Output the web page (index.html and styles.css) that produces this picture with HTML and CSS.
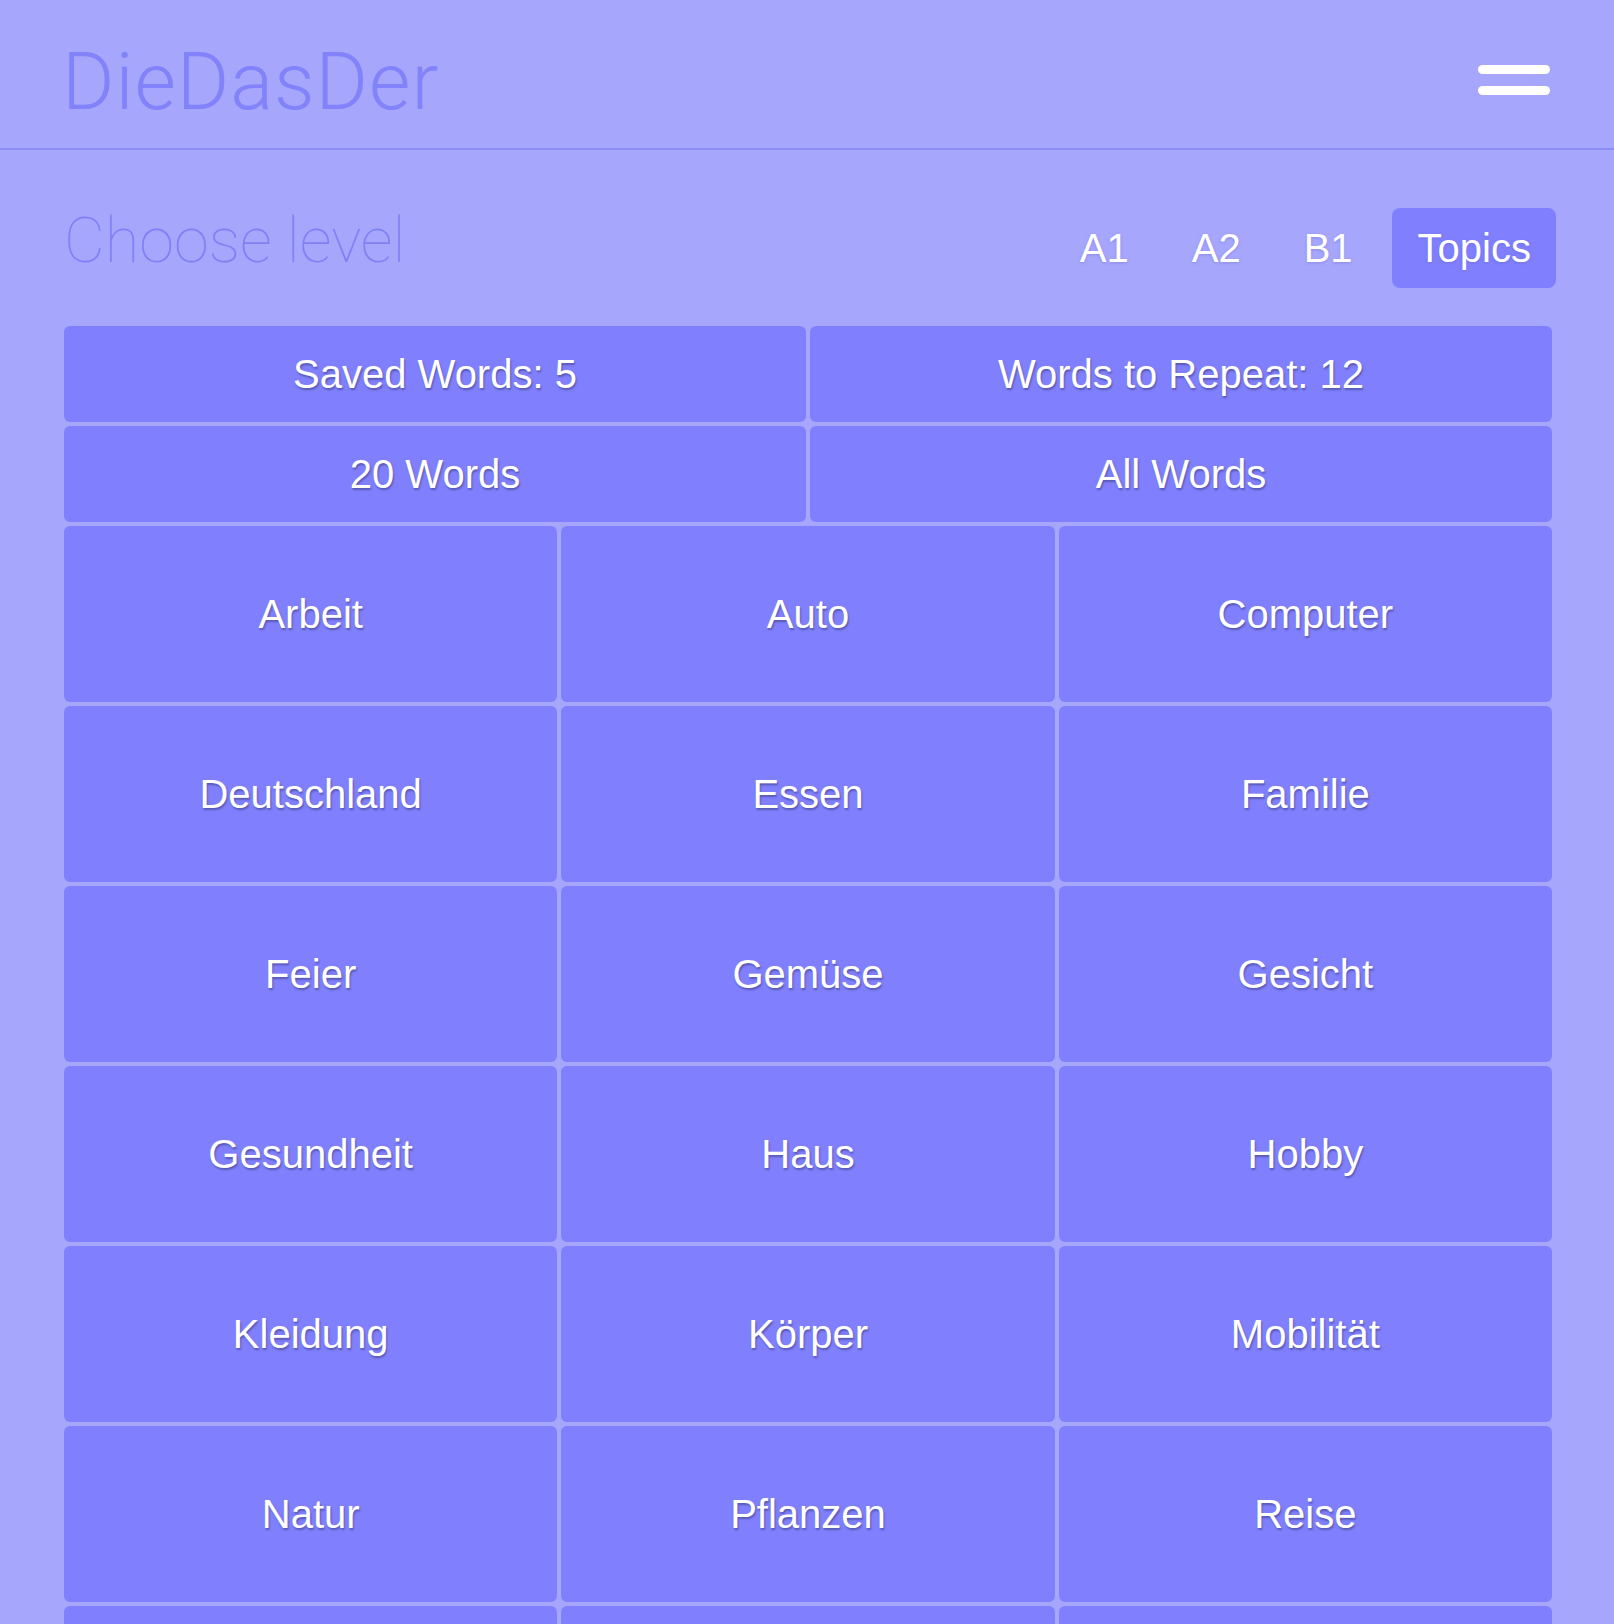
FILE: index.html
```html
<!DOCTYPE html>
<html lang="en">
<head>
<meta charset="utf-8">
<title>DieDasDer</title>
<link rel="stylesheet" href="styles.css">
</head>
<body>
<header class="topbar">
  <div class="logo">DieDasDer</div>
  <button class="burger" aria-label="Menu"><span class="bar"></span><span class="bar"></span></button>
</header>
<main class="content">
  <section class="level-row">
    <h1 class="level-title">Choose level</h1>
    <nav class="levels">
      <a class="level">A1</a>
      <a class="level">A2</a>
      <a class="level">B1</a>
      <a class="level active">Topics</a>
    </nav>
  </section>
  <section class="grid">
    <div class="tile wide">Saved Words: 5</div>
    <div class="tile wide">Words to Repeat: 12</div>
    <div class="tile wide">20 Words</div>
    <div class="tile wide">All Words</div>
    <div class="tile topic">Arbeit</div>
    <div class="tile topic">Auto</div>
    <div class="tile topic">Computer</div>
    <div class="tile topic">Deutschland</div>
    <div class="tile topic">Essen</div>
    <div class="tile topic">Familie</div>
    <div class="tile topic">Feier</div>
    <div class="tile topic">Gemüse</div>
    <div class="tile topic">Gesicht</div>
    <div class="tile topic">Gesundheit</div>
    <div class="tile topic">Haus</div>
    <div class="tile topic">Hobby</div>
    <div class="tile topic">Kleidung</div>
    <div class="tile topic">Körper</div>
    <div class="tile topic">Mobilität</div>
    <div class="tile topic">Natur</div>
    <div class="tile topic">Pflanzen</div>
    <div class="tile topic">Reise</div>
    <div class="tile topic"></div>
    <div class="tile topic"></div>
    <div class="tile topic"></div>
  </section>
</main>
</body>
</html>
```

FILE: styles.css
```css
html, body {
  margin: 0;
  padding: 0;
}
body {
  background: #a6a6fc;
  font-family: "Liberation Sans", Arial, sans-serif;
  color: #ffffff;
}
.topbar {
  height: 148px;
  border-bottom: 2px solid #8e8ef9;
  box-sizing: content-box;
  display: flex;
  align-items: center;
  justify-content: space-between;
  padding: 0 64px 0 62px;
}
.logo {
  font-family: Roboto, "Liberation Sans", sans-serif;
  font-weight: 300;
  font-size: 80px;
  letter-spacing: 1px;
  line-height: 1;
  color: #8282fa;
  padding-top: 16px;
}
.burger {
  background: none;
  border: 0;
  padding: 0;
  margin-top: 12px;
  display: flex;
  flex-direction: column;
  gap: 12px;
}
.bar {
  display: block;
  width: 72px;
  height: 9px;
  border-radius: 5px;
  background: #ffffff;
}
.content {
  padding: 0 62px 0 64px;
}
.level-row {
  display: flex;
  align-items: baseline;
  justify-content: space-between;
  padding-top: 58px;
  margin-bottom: 38px;
  margin-right: -4px;
}
.level-title {
  margin: 0;
  font-family: Roboto, "Liberation Sans", sans-serif;
  font-weight: 100;
  font-size: 63px;
  line-height: 1;
  color: #8080f6;
}
.levels {
  display: flex;
  align-items: baseline;
  gap: 15px;
}
.level {
  display: block;
  padding: 0 24px;
  height: 80px;
  line-height: 80px;
  font-size: 40px;
  border-radius: 8px;
  color: #ffffff;
  text-shadow: 0 1px 3px rgba(90, 90, 200, 0.35);
}
.level.active {
  background: #8080fe;
  padding: 0 25px 0 26px;
}
.grid {
  display: grid;
  grid-template-columns: repeat(6, 1fr);
  gap: 4px;
}
.tile {
  display: flex;
  align-items: center;
  justify-content: center;
  background: #8080fe;
  border-radius: 6px;
  font-size: 40px;
  color: #ffffff;
  text-shadow: 1px 2px 2px rgba(40, 40, 90, 0.45);
}
.tile.wide {
  grid-column: span 3;
  height: 96px;
}
.tile.topic {
  grid-column: span 2;
  height: 176px;
}
```
